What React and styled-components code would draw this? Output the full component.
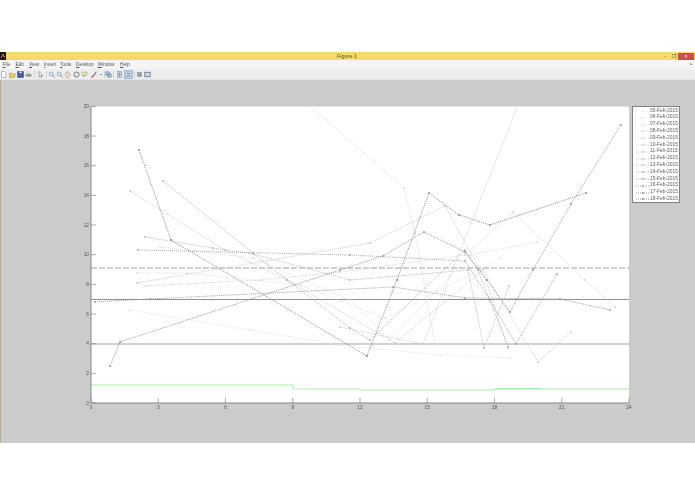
import React from "react";
import styled, { createGlobalStyle } from "styled-components";

const Global = createGlobalStyle`
  html, body { margin: 0; padding: 0; background: #fff; }
  body { font-family: "Liberation Sans", Arial, sans-serif; }
`;
const Page = styled.div`
  width: 695px; height: 494px; overflow: hidden; background: #fff;
  display: flex; flex-direction: column; padding-top: 52px; box-sizing: border-box;
  filter: blur(0.3px);
`;
const TitleBar = styled.div`
  height: 8px; background: #f3da6b; display: flex; align-items: center;
`;
const AppIcon = styled.svg`width: 6px; height: 8px; display: block; flex: none;`;
const Title = styled.div`
  flex: 1; text-align: center; font-size: 5.5px; line-height: 8px; color: #5c5228; padding-left: 28px;
`;
const WinControls = styled.div`display: flex; align-items: center; height: 100%;`;
const WinButton = styled.div`
  width: ${p => p.$wide ? 16 : 9}px; height: 7px; display: flex; align-items: center; justify-content: center;
  font-size: 5px; line-height: 7px; color: ${p => p.$wide ? "#fff" : "#444"};
  background: ${p => p.$wide ? "#c9504f" : "transparent"};
  margin-right: ${p => p.$wide ? 1 : 0}px;
`;
const MenuBar = styled.div`
  height: 9px; background: #f5f5f5; display: flex; align-items: center; position: relative;
  font-size: 4.8px; color: #555; padding-left: 2.5px;
`;
const MenuItem = styled.span`
  width: ${p => p.$w}px; line-height: 9px;
  &::first-letter { text-decoration: underline; }
`;
const MenuArrow = styled.span`position: absolute; right: 3px; top: 1px; font-size: 4px; color: #333;`;
const ToolBar = styled.div`
  height: 11px; background: #eeeeee; display: flex; align-items: center;
  border-bottom: 1px solid #e4e4e4; box-sizing: border-box;
`;
const ToolIcon = styled.svg`
  width: 7px; height: 7px; margin-right: ${p => p.$gap}px; flex: none; display: block;
  background: ${p => p.$on ? "#c6dcf2" : "transparent"};
  outline: ${p => p.$on ? "1px solid #9cbfe0" : "none"};
`;
const Sep = styled.div`width: 1px; height: 7px; background: #d0d0d0; margin-right: ${p => p.$gap}px; flex: none;`;
const Canvas = styled.div`
  height: 363px; background: #cbcbcb; position: relative; border-left: 1px solid #b5ac98; box-sizing: border-box;
`;
const Chart = styled.svg`width: 694px; height: 363px; display: block; margin-left: -1px;`;
const LegendBox = styled.div`
  position: absolute; left: 631px; top: 26px; width: 48px; height: 97px; box-sizing: border-box;
  background: #fff; border: 1px solid #808080; padding: 0.7px 2px 0 3px;
  display: flex; flex-direction: column;
`;
const LegendRow = styled.div`
  display: flex; align-items: center; justify-content: space-between; height: 6.8px; flex: none;
  font-size: 4.9px; line-height: 6.8px; color: #5c5c5c; white-space: nowrap;
`;
const Sample = styled.svg`width: 14px; height: 4px; display: block; flex: none;`;

const X = h => 91 + h * 22.417;
const Y = v => 323 - v * 14.83;

const tones = ["#e6e6e6","#e2e2e2","#dcdcdc","#d6d6d6","#d0d0d0","#cacaca","#c4c4c4","#bcbcbc","#b4b4b4","#acacac","#a2a2a2","#969696","#8c8c8c","#7e7e7e"];
const dates = ["05","06","07","08","09","10","11","12","13","14","15","16","17","18"].map(d => `${d}-Feb-2015`);

// points are pixel positions on the page; y is shifted by the canvas top (80)
const series = [
  { t: 1, p: "130,310 250,330 340,345 440,355 510,358" },
  { t: 2, p: "137,273 187,273 300,285 385,318 480,270 500,258" },
  { t: 2, p: "160,247 253,258 350,300 390,340 470,255 537,242" },
  { t: 3, p: "310,106 404,188 415,233 435,345" },
  { t: 4, p: "145,286 260,280 340,272 465,255 513,212 585,280 615,307" },
  { t: 5, p: "340,327 423,344 520,100" },
  { t: 6, p: "130,191 225,250 287,280 395,343 483,270 538,362 571,332" },
  { t: 6, p: "137,283 370,243 445,206 486,280 508,348" },
  { t: 8, p: "145,237 213,248 253,254 350,280 468,270 484,348 509,286" },
  { t: 9, p: "163,181 253,253 287,280 350,328 370,340 465,250 478,270 508,347" },
  { t: 10, p: "138,250 350,255 465,261 490,300 516,344 557,274" },
  { t: 11, p: "95,302 150,299 393,287 465,298 560,299 610,310" },
  { t: 12, p: "110,366 120,342 340,270 383,256 424,232 465,252 487,280 510,312 533,270 571,204 621,125" },
  { t: 13, p: "139,150 171,240 367,356 397,280 429,193 459,215 490,225 586,193" },
];

const toPts = s => s.split(" ").map(q => q.split(",").map(Number)).map(([x, y]) => [x, y - 80]);

const xTicks = [0, 3, 6, 9, 12, 15, 18, 21, 24];
const yTicks = [0, 2, 4, 6, 8, 10, 12, 14, 16, 18, 20];

function Plot() {
  return (
    <Chart viewBox="0 0 694 363">
      <defs>
        <clipPath id="axes"><rect x="91" y="26.5" width="538" height="296.5" /></clipPath>
      </defs>
      <rect x="91" y="26.5" width="538" height="296.5" fill="#fff" />
      <g clipPath="url(#axes)">
        <line x1="91" x2="629" y1="188" y2="188" stroke="#a0a0a0" strokeWidth="1" strokeDasharray="6 2" />
        <line x1="91" x2="629" y1="219.5" y2="219.5" stroke="#858585" strokeWidth="0.9" />
        <line x1="91" x2="629" y1="264" y2="264" stroke="#a4a4a4" strokeWidth="1.2" />
        <path d="M91 305H293V309H360V310H495V309H629" fill="none" stroke="#a8eda8" strokeWidth="1" />
        <path d="M293 305H312V309H293" fill="none" stroke="#e4f8e4" strokeWidth="0.7" />
        <path d="M495 308.5H541" fill="none" stroke="#a0e6a0" strokeWidth="0.8" />
        {series.map((s, i) => {
          const pts = toPts(s.p);
          return (
            <g key={i}>
              <polyline points={pts.map(a => a.join(",")).join(" ")} fill="none" stroke={tones[s.t]} strokeWidth="0.9" strokeDasharray="1 1" />
              {pts.map(([x, y], k) => <rect key={k} x={x - 0.8} y={y - 0.8} width="1.6" height="1.6" fill={tones[s.t]} />)}
            </g>
          );
        })}
      </g>
      <path d="M91 26.5V323H629" fill="none" stroke="#858585" strokeWidth="1" />
      {yTicks.map(v => (
        <g key={v}>
          <line x1="91" x2="96" y1={Y(v)} y2={Y(v)} stroke="#858585" strokeWidth="0.7" />
          <text x="89" y={Y(v) + 1.7} textAnchor="end" fontSize="4.8" fill="#555" fontFamily="Liberation Sans">{v}</text>
        </g>
      ))}
      {xTicks.map(h => (
        <g key={h}>
          <line x1={X(h)} x2={X(h)} y1="323" y2="318" stroke="#858585" strokeWidth="0.7" />
          <text x={X(h)} y="329" textAnchor="middle" fontSize="4.8" fill="#555" fontFamily="Liberation Sans">{h}</text>
        </g>
      ))}
    </Chart>
  );
}

const menus = [["File", 13], ["Edit", 13.5], ["View", 15], ["Insert", 16], ["Tools", 16], ["Desktop", 21.5], ["Window", 22.5], ["Help", 20]];

const tools = [
  { g: 1.5, d: <path d="M1.5 .5h3l1.5 1.5v4.5h-4.5z" fill="#fff" stroke="#8a8a8a" strokeWidth=".6" /> },
  { g: 1, d: <path d="M.5 2h2l1 1h3l-1 3.5h-5z" fill="#e9c75e" stroke="#a98b33" strokeWidth=".5" /> },
  { g: 1, d: <path d="M.5 .5h6v6h-6z M2 .5v2h3v-2" fill="#45589c" stroke="#33417a" strokeWidth=".5" /> },
  { g: 2.5, d: <g><rect x="1.5" y=".5" width="4" height="2.5" fill="#ddd" /><rect x=".5" y="3" width="6" height="2.6" fill="#999" /></g> },
  { sep: 1.5 },
  { g: 2.5, d: <path d="M2 .5v5.5l1.3-1.2 1 1.7.8-.4-1-1.6h1.7z" fill="#fff" stroke="#555" strokeWidth=".5" /> },
  { sep: .5 },
  { g: 1, d: <g fill="none"><circle cx="3" cy="3" r="2" fill="#dce8f5" stroke="#6f8fb5" strokeWidth=".6" /><path d="M4.5 4.5l2 2" stroke="#a66" strokeWidth="1" /></g> },
  { g: 1, d: <g fill="none"><circle cx="3" cy="3" r="2" fill="#dce8f5" stroke="#6f8fb5" strokeWidth=".6" /><path d="M4.5 4.5l2 2" stroke="#a66" strokeWidth="1" /></g> },
  { g: 2, d: <path d="M2 6.5l-1-2.5V3h1V1h3v2h1v2l-1 1.5z" fill="#f0ddc6" stroke="#998" strokeWidth=".5" /> },
  { g: 1, d: <circle cx="3.5" cy="3.5" r="2.5" fill="none" stroke="#777" strokeWidth="1" /> },
  { g: 2, d: <g><rect x="1" y="1" width="5" height="3.5" fill="#e8e3a8" stroke="#888" strokeWidth=".4" /><path d="M2 4.5v2l2-2" fill="#999" /></g> },
  { g: 0, d: <g><path d="M1 6l3-3 1 1-3 3z" fill="#c55" /><path d="M4 3l2-2.5.7.6L5 4z" fill="#57a" /></g> },
  { g: .5, d: <path d="M3 3h2L4 4.2z" fill="#555" /> },
  { sep: 0 },
  { g: 1, d: <g fill="none" stroke="#5b7fa8" strokeWidth=".9"><rect x="1" y="1" width="3" height="3" /><rect x="3" y="3" width="3" height="3" /></g> },
  { sep: 1.5 },
  { g: 2, d: <g><rect x="1.5" y=".5" width="4" height="6" fill="#e9f0f8" stroke="#777" strokeWidth=".5" /><rect x="2.5" y="1.5" width="2" height="4" fill="#6d93c4" /></g> },
  { g: 2.5, on: true, d: <g><rect x="1" y="1" width="5" height="5" fill="#f4f7fb" stroke="#6d7f9c" strokeWidth=".5" /><rect x="2" y="2" width="3" height="1" fill="#6d7f9c" /><rect x="2" y="4" width="3" height="1" fill="#6d7f9c" /></g> },
  { sep: .5 },
  { g: 1, d: <rect x="1.5" y="1.5" width="4" height="4" fill="#9aa0a8" stroke="#777" strokeWidth=".4" /> },
  { g: 0, d: <g fill="#cfd8e4" stroke="#55657c" strokeWidth=".7"><rect x=".8" y="1.2" width="5.4" height="4.6" /></g> },
];

export default function App() {
  return (
    <Page>
      <Global />
      <TitleBar>
        <AppIcon viewBox="0 0 6 8">
          <rect width="6" height="8" fill="#1c1608" />
          <path d="M1 6l2-4 1 3 1-1" fill="none" stroke="#e08a2b" strokeWidth=".9" />
        </AppIcon>
        <Title>Figure 1</Title>
        <WinControls>
          <WinButton>-</WinButton>
          <WinButton>❐</WinButton>
          <WinButton $wide>×</WinButton>
        </WinControls>
      </TitleBar>
      <MenuBar>
        {menus.map(([m, w]) => <MenuItem key={m} $w={w}>{m}</MenuItem>)}
        <MenuArrow>↘</MenuArrow>
      </MenuBar>
      <ToolBar>
        {tools.map((t, i) => t.sep !== undefined
          ? <Sep key={i} $gap={t.sep} />
          : <ToolIcon key={i} viewBox="0 0 7 7" $gap={t.g} $on={t.on}>{t.d}</ToolIcon>)}
      </ToolBar>
      <Canvas>
        <Plot />
        <LegendBox>
          {dates.map((d, i) => (
            <LegendRow key={d}>
              <Sample viewBox="0 0 14 4">
                <line x1="0" x2="14" y1="2" y2="2" stroke={tones[i]} strokeWidth=".8" strokeDasharray="1 1" />
                <rect x="6" y="1.2" width="1.6" height="1.6" fill={tones[i]} />
              </Sample>
              {d}
            </LegendRow>
          ))}
        </LegendBox>
      </Canvas>
    </Page>
  );
}
